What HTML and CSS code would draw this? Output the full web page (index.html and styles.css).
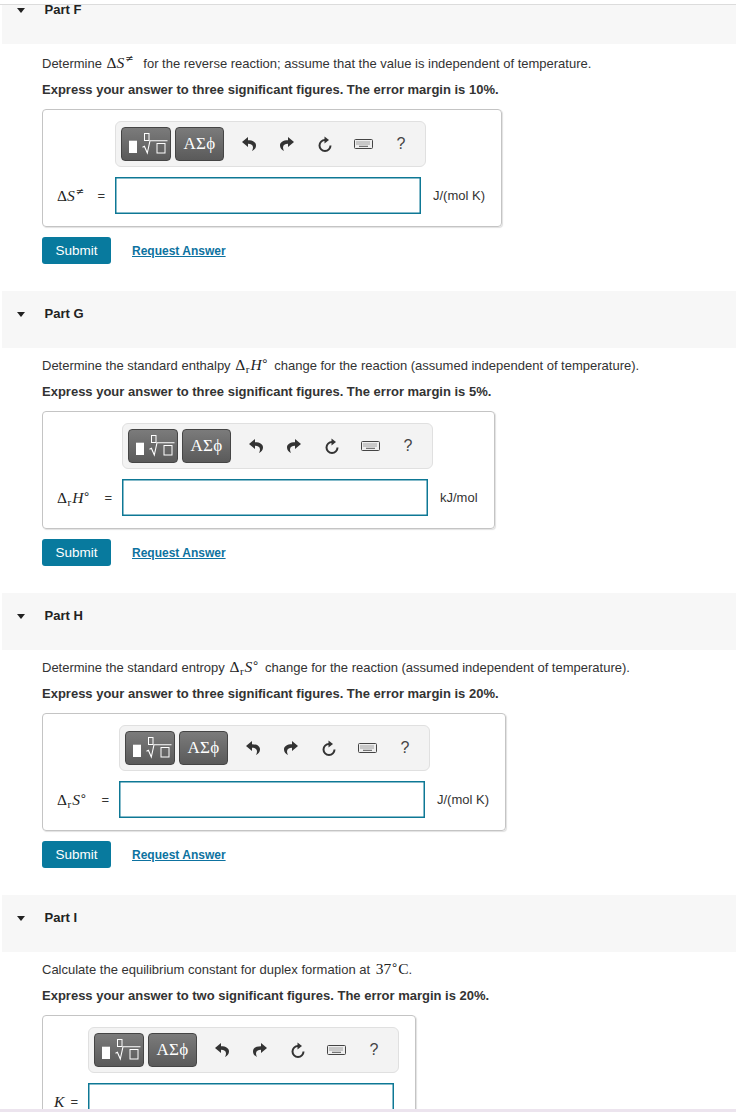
FILE: index.html
```html
<!DOCTYPE html>
<html lang="en">
<head>
<meta charset="utf-8">
<title>Parts F–I</title>
<link rel="stylesheet" href="styles.css">
</head>
<body>
<div class="topline"></div>
<main class="page">

  <section class="part">
    <div class="part-head"><span class="caret"></span>Part F</div>
    <div class="part-body first">
      <p class="q">Determine <span class="m">Δ<i>S</i><sup class="ne">≠</sup></span> for the reverse reaction; assume that the value is independent of temperature.</p>
      <p class="req">Express your answer to three significant figures. The error margin is 10%.</p>
      <div class="answer">
        <div class="toolbar">
          <span class="tbtn"><svg width="48" height="32" viewBox="0 0 48 32"><rect x="7" y="12.7" width="8" height="12.3" fill="#fff"/><rect x="22.5" y="5.5" width="4.5" height="7" fill="none" stroke="#fff" stroke-width="1"/><path d="M20.5 19.2 L22.4 18.3 L25.3 25 L28 12.7 L45.5 12.7" fill="none" stroke="#fff" stroke-width="1.1"/><rect x="35" y="15.5" width="8" height="9.5" fill="none" stroke="#fff" stroke-width="1"/></svg></span>
          <span class="tbtn greek">ΑΣϕ</span>
          <span class="ticon"><svg width="14" height="14" viewBox="0 0 14 14"><path d="M6 3.2 V0 L0 5 L6 10 V6.8 C9 6.8 11 8 11 10.6 C11 11.8 10.6 13 10 14 C12.4 12.8 14 11 14 8.4 C14 5.2 11 3.2 6 3.2 Z" fill="#333"/></svg></span>
          <span class="ticon"><svg width="14" height="14" viewBox="0 0 14 14"><g transform="translate(14 0) scale(-1 1)"><path d="M6 3.2 V0 L0 5 L6 10 V6.8 C9 6.8 11 8 11 10.6 C11 11.8 10.6 13 10 14 C12.4 12.8 14 11 14 8.4 C14 5.2 11 3.2 6 3.2 Z" fill="#333"/></g></svg></span>
          <span class="ticon"><svg width="14" height="16" viewBox="0 0 14 16"><path d="M12.5 9.5 A5.5 5.5 0 1 1 7 4" fill="none" stroke="#333" stroke-width="2"/><path d="M6.5 0.6 L11 4 L6.5 7.4 Z" fill="#333"/></svg></span>
          <span class="ticon"><svg width="19" height="10" viewBox="0 0 19 10"><rect x="0.5" y="0.5" width="18" height="9" rx="1" fill="#eee" stroke="#444"/><line x1="2.5" y1="3" x2="16.5" y2="3" stroke="#555" stroke-dasharray="1 1"/><line x1="2.5" y1="5" x2="16.5" y2="5" stroke="#555" stroke-dasharray="1 1"/><line x1="5" y1="7.3" x2="14" y2="7.3" stroke="#555"/></svg></span>
          <span class="ticon help">?</span>
        </div>
        <span class="lbl lbl-f"><span class="m">Δ<i>S</i><sup class="ne">≠</sup></span><span class="eq">=</span></span>
        <span class="field"></span>
        <span class="unit">J/(mol K)</span>
      </div>
      <div class="actions"><span class="submit">Submit</span><a class="reqans" href="#">Request Answer</a></div>
    </div>
  </section>

  <section class="part">
    <div class="part-head"><span class="caret"></span>Part G</div>
    <div class="part-body">
      <p class="q">Determine the standard enthalpy <span class="m">Δ<sub>r</sub><i>H</i><sup class="deg">∘</sup></span> change for the reaction (assumed independent of temperature).</p>
      <p class="req">Express your answer to three significant figures. The error margin is 5%.</p>
      <div class="answer">
        <div class="toolbar">
          <span class="tbtn"><svg width="48" height="32" viewBox="0 0 48 32"><rect x="7" y="12.7" width="8" height="12.3" fill="#fff"/><rect x="22.5" y="5.5" width="4.5" height="7" fill="none" stroke="#fff" stroke-width="1"/><path d="M20.5 19.2 L22.4 18.3 L25.3 25 L28 12.7 L45.5 12.7" fill="none" stroke="#fff" stroke-width="1.1"/><rect x="35" y="15.5" width="8" height="9.5" fill="none" stroke="#fff" stroke-width="1"/></svg></span>
          <span class="tbtn greek">ΑΣϕ</span>
          <span class="ticon"><svg width="14" height="14" viewBox="0 0 14 14"><path d="M6 3.2 V0 L0 5 L6 10 V6.8 C9 6.8 11 8 11 10.6 C11 11.8 10.6 13 10 14 C12.4 12.8 14 11 14 8.4 C14 5.2 11 3.2 6 3.2 Z" fill="#333"/></svg></span>
          <span class="ticon"><svg width="14" height="14" viewBox="0 0 14 14"><g transform="translate(14 0) scale(-1 1)"><path d="M6 3.2 V0 L0 5 L6 10 V6.8 C9 6.8 11 8 11 10.6 C11 11.8 10.6 13 10 14 C12.4 12.8 14 11 14 8.4 C14 5.2 11 3.2 6 3.2 Z" fill="#333"/></g></svg></span>
          <span class="ticon"><svg width="14" height="16" viewBox="0 0 14 16"><path d="M12.5 9.5 A5.5 5.5 0 1 1 7 4" fill="none" stroke="#333" stroke-width="2"/><path d="M6.5 0.6 L11 4 L6.5 7.4 Z" fill="#333"/></svg></span>
          <span class="ticon"><svg width="19" height="10" viewBox="0 0 19 10"><rect x="0.5" y="0.5" width="18" height="9" rx="1" fill="#eee" stroke="#444"/><line x1="2.5" y1="3" x2="16.5" y2="3" stroke="#555" stroke-dasharray="1 1"/><line x1="2.5" y1="5" x2="16.5" y2="5" stroke="#555" stroke-dasharray="1 1"/><line x1="5" y1="7.3" x2="14" y2="7.3" stroke="#555"/></svg></span>
          <span class="ticon help">?</span>
        </div>
        <span class="lbl lbl-g"><span class="m">Δ<sub>r</sub><i>H</i><sup class="deg">∘</sup></span><span class="eq">=</span></span>
        <span class="field"></span>
        <span class="unit">kJ/mol</span>
      </div>
      <div class="actions"><span class="submit">Submit</span><a class="reqans" href="#">Request Answer</a></div>
    </div>
  </section>

  <section class="part">
    <div class="part-head"><span class="caret"></span>Part H</div>
    <div class="part-body">
      <p class="q">Determine the standard entropy <span class="m">Δ<sub>r</sub><i>S</i><sup class="deg">∘</sup></span> change for the reaction (assumed independent of temperature).</p>
      <p class="req">Express your answer to three significant figures. The error margin is 20%.</p>
      <div class="answer">
        <div class="toolbar">
          <span class="tbtn"><svg width="48" height="32" viewBox="0 0 48 32"><rect x="7" y="12.7" width="8" height="12.3" fill="#fff"/><rect x="22.5" y="5.5" width="4.5" height="7" fill="none" stroke="#fff" stroke-width="1"/><path d="M20.5 19.2 L22.4 18.3 L25.3 25 L28 12.7 L45.5 12.7" fill="none" stroke="#fff" stroke-width="1.1"/><rect x="35" y="15.5" width="8" height="9.5" fill="none" stroke="#fff" stroke-width="1"/></svg></span>
          <span class="tbtn greek">ΑΣϕ</span>
          <span class="ticon"><svg width="14" height="14" viewBox="0 0 14 14"><path d="M6 3.2 V0 L0 5 L6 10 V6.8 C9 6.8 11 8 11 10.6 C11 11.8 10.6 13 10 14 C12.4 12.8 14 11 14 8.4 C14 5.2 11 3.2 6 3.2 Z" fill="#333"/></svg></span>
          <span class="ticon"><svg width="14" height="14" viewBox="0 0 14 14"><g transform="translate(14 0) scale(-1 1)"><path d="M6 3.2 V0 L0 5 L6 10 V6.8 C9 6.8 11 8 11 10.6 C11 11.8 10.6 13 10 14 C12.4 12.8 14 11 14 8.4 C14 5.2 11 3.2 6 3.2 Z" fill="#333"/></g></svg></span>
          <span class="ticon"><svg width="14" height="16" viewBox="0 0 14 16"><path d="M12.5 9.5 A5.5 5.5 0 1 1 7 4" fill="none" stroke="#333" stroke-width="2"/><path d="M6.5 0.6 L11 4 L6.5 7.4 Z" fill="#333"/></svg></span>
          <span class="ticon"><svg width="19" height="10" viewBox="0 0 19 10"><rect x="0.5" y="0.5" width="18" height="9" rx="1" fill="#eee" stroke="#444"/><line x1="2.5" y1="3" x2="16.5" y2="3" stroke="#555" stroke-dasharray="1 1"/><line x1="2.5" y1="5" x2="16.5" y2="5" stroke="#555" stroke-dasharray="1 1"/><line x1="5" y1="7.3" x2="14" y2="7.3" stroke="#555"/></svg></span>
          <span class="ticon help">?</span>
        </div>
        <span class="lbl lbl-h"><span class="m">Δ<sub>r</sub><i>S</i><sup class="deg">∘</sup></span><span class="eq">=</span></span>
        <span class="field"></span>
        <span class="unit">J/(mol K)</span>
      </div>
      <div class="actions"><span class="submit">Submit</span><a class="reqans" href="#">Request Answer</a></div>
    </div>
  </section>

  <section class="part">
    <div class="part-head"><span class="caret"></span>Part I</div>
    <div class="part-body">
      <p class="q">Calculate the equilibrium constant for duplex formation at <span class="m tight">37<sup class="deg">∘</sup>C</span>.</p>
      <p class="req">Express your answer to two significant figures. The error margin is 20%.</p>
      <div class="answer answer-i">
        <div class="toolbar">
          <span class="tbtn"><svg width="48" height="32" viewBox="0 0 48 32"><rect x="7" y="12.7" width="8" height="12.3" fill="#fff"/><rect x="22.5" y="5.5" width="4.5" height="7" fill="none" stroke="#fff" stroke-width="1"/><path d="M20.5 19.2 L22.4 18.3 L25.3 25 L28 12.7 L45.5 12.7" fill="none" stroke="#fff" stroke-width="1.1"/><rect x="35" y="15.5" width="8" height="9.5" fill="none" stroke="#fff" stroke-width="1"/></svg></span>
          <span class="tbtn greek">ΑΣϕ</span>
          <span class="ticon"><svg width="14" height="14" viewBox="0 0 14 14"><path d="M6 3.2 V0 L0 5 L6 10 V6.8 C9 6.8 11 8 11 10.6 C11 11.8 10.6 13 10 14 C12.4 12.8 14 11 14 8.4 C14 5.2 11 3.2 6 3.2 Z" fill="#333"/></svg></span>
          <span class="ticon"><svg width="14" height="14" viewBox="0 0 14 14"><g transform="translate(14 0) scale(-1 1)"><path d="M6 3.2 V0 L0 5 L6 10 V6.8 C9 6.8 11 8 11 10.6 C11 11.8 10.6 13 10 14 C12.4 12.8 14 11 14 8.4 C14 5.2 11 3.2 6 3.2 Z" fill="#333"/></g></svg></span>
          <span class="ticon"><svg width="14" height="16" viewBox="0 0 14 16"><path d="M12.5 9.5 A5.5 5.5 0 1 1 7 4" fill="none" stroke="#333" stroke-width="2"/><path d="M6.5 0.6 L11 4 L6.5 7.4 Z" fill="#333"/></svg></span>
          <span class="ticon"><svg width="19" height="10" viewBox="0 0 19 10"><rect x="0.5" y="0.5" width="18" height="9" rx="1" fill="#eee" stroke="#444"/><line x1="2.5" y1="3" x2="16.5" y2="3" stroke="#555" stroke-dasharray="1 1"/><line x1="2.5" y1="5" x2="16.5" y2="5" stroke="#555" stroke-dasharray="1 1"/><line x1="5" y1="7.3" x2="14" y2="7.3" stroke="#555"/></svg></span>
          <span class="ticon help">?</span>
        </div>
        <span class="lbl lbl-i"><span class="m"><i>K</i></span><span class="eq">=</span></span>
        <span class="field"></span>
      </div>
    </div>
  </section>

</main>
<div class="bottomline"></div>
</body>
</html>
```

FILE: styles.css
```css
html, body {
  margin: 0;
  padding: 0;
  background: #fff;
}
body {
  font-family: "Liberation Sans", Arial, sans-serif;
  font-size: 13px;
  color: #333;
}
.topline {
  position: fixed;
  top: 0;
  left: 0;
  right: 0;
  height: 4px;
  background: #fff;
  border-bottom: 1px solid #dcdcdc;
  z-index: 5;
}
.bottomline {
  position: fixed;
  left: 0;
  right: 0;
  bottom: 0;
  height: 3px;
  background: #ece4ee;
  z-index: 5;
}
.page {
  margin-top: -13px;
}
.part {
  margin-bottom: 27px;
}
.part-head {
  margin-left: 2px;
  height: 57px;
  box-sizing: border-box;
  padding: 15px 0 0 14px;
  background: #f7f7f7;
  display: flex;
  align-items: flex-start;
  font-weight: bold;
  font-size: 13px;
  line-height: 16px;
  color: #222;
}
.caret {
  width: 0;
  height: 0;
  border-left: 4.5px solid transparent;
  border-right: 4.5px solid transparent;
  border-top: 5px solid #222;
  margin: 5.5px 20px 0 0.5px;
}
.part-body {
  padding-left: 42px;
  padding-top: 10px;
}
.part-body.first {
  padding-top: 12px;
}
.part-body p {
  margin: 0 0 10px 0;
  line-height: 16px;
  height: 16px;
}
.q {
  color: #333;
}
.req {
  font-weight: bold;
  color: #333;
}
.part-body p.req {
  margin-bottom: 11px;
}
.m {
  font-family: "Liberation Serif", "DejaVu Serif", serif;
  font-size: 15.5px;
  line-height: 0;
  color: #222;
  padding: 0 2px 0 1px;
}
.m.tight {
  padding: 0 0 0 2px;
}
.m i {
  font-style: italic;
}
.m sup {
  font-size: 11px;
  line-height: 0;
  vertical-align: 6px;
  margin-left: 1px;
}
.m sup.ne {
  font-family: "DejaVu Serif", serif;
  font-size: 10px;
  margin-right: 4px;
}
.m sup.deg {
  font-family: "DejaVu Sans", sans-serif;
  font-size: 12px;
  vertical-align: 5px;
  margin-left: -0.5px;
  margin-right: 0;
}
.m sub {
  font-size: 11px;
  line-height: 0;
  vertical-align: -3px;
  margin: 0 1px 0 0.5px;
}

.answer {
  display: grid;
  width: max-content;
  grid-template-columns: auto 311px auto;
  row-gap: 10px;
  align-items: center;
  padding: 11px 16px 12px 14px;
  border: 1px solid #c4c4c4;
  border-radius: 4px;
  box-shadow: 1px 1px 1px rgba(0, 0, 0, 0.12);
}
.answer-i {
  grid-template-columns: auto 311px;
  padding-left: 11px;
}
.toolbar {
  grid-column: 2;
  grid-row: 1;
  width: 311px;
  height: 46px;
  box-sizing: border-box;
  display: flex;
  align-items: center;
  padding: 0 4px 0 5px;
  background: #f3f3f3;
  border: 1px solid #e0e0e0;
  border-radius: 6px;
}
.tbtn {
  width: 50px;
  height: 34px;
  box-sizing: border-box;
  display: flex;
  align-items: center;
  justify-content: center;
  border: 1px solid #454545;
  border-radius: 4px;
  background: linear-gradient(#7b7b7b, #5a5a5a);
  color: #fff;
}
.tbtn + .tbtn {
  margin-left: 4px;
  width: 49px;
}
.tbtn svg {
  display: block;
}
.greek {
  font-family: "Liberation Serif", "DejaVu Serif", serif;
  font-size: 17px;
  letter-spacing: 0.3px;
}
.ticon {
  width: 38px;
  height: 34px;
  display: flex;
  align-items: center;
  justify-content: center;
}
.tbtn + .ticon {
  margin-left: 6px;
}
.ticon svg {
  display: block;
}
.help {
  font-family: "Liberation Sans", Arial, sans-serif;
  font-size: 16px;
  color: #444;
}
.lbl {
  grid-column: 1;
  grid-row: 2;
  display: flex;
  align-items: center;
  justify-content: space-between;
  box-sizing: border-box;
  padding-right: 10px;
  white-space: nowrap;
}
.lbl .m {
  padding: 0;
  line-height: 16px;
}
.lbl-f { width: 58px; }
.lbl-g { width: 65px; }
.lbl-h { width: 62px; }
.lbl-i { width: 34px; }
.eq {
  font-size: 13px;
  color: #333;
}
.field {
  grid-column: 2;
  grid-row: 2;
  width: 306px;
  height: 37px;
  box-sizing: border-box;
  border: 1px solid #0e7895;
  box-shadow: inset 0 0 0 0.5px #0e7895;
  background: #fff;
}
.unit {
  grid-column: 3;
  grid-row: 2;
  margin-left: 7px;
  color: #333;
  white-space: nowrap;
}

.actions {
  margin-top: 10px;
  display: flex;
  align-items: center;
}
.submit {
  width: 69px;
  height: 27px;
  box-sizing: border-box;
  display: flex;
  align-items: center;
  justify-content: center;
  background: #087a9e;
  color: #fff;
  border-radius: 3px;
  font-size: 13.5px;
}
.reqans {
  margin-left: 21px;
  font-weight: bold;
  font-size: 12px;
  color: #0d72a0;
  text-decoration: underline;
}
```
